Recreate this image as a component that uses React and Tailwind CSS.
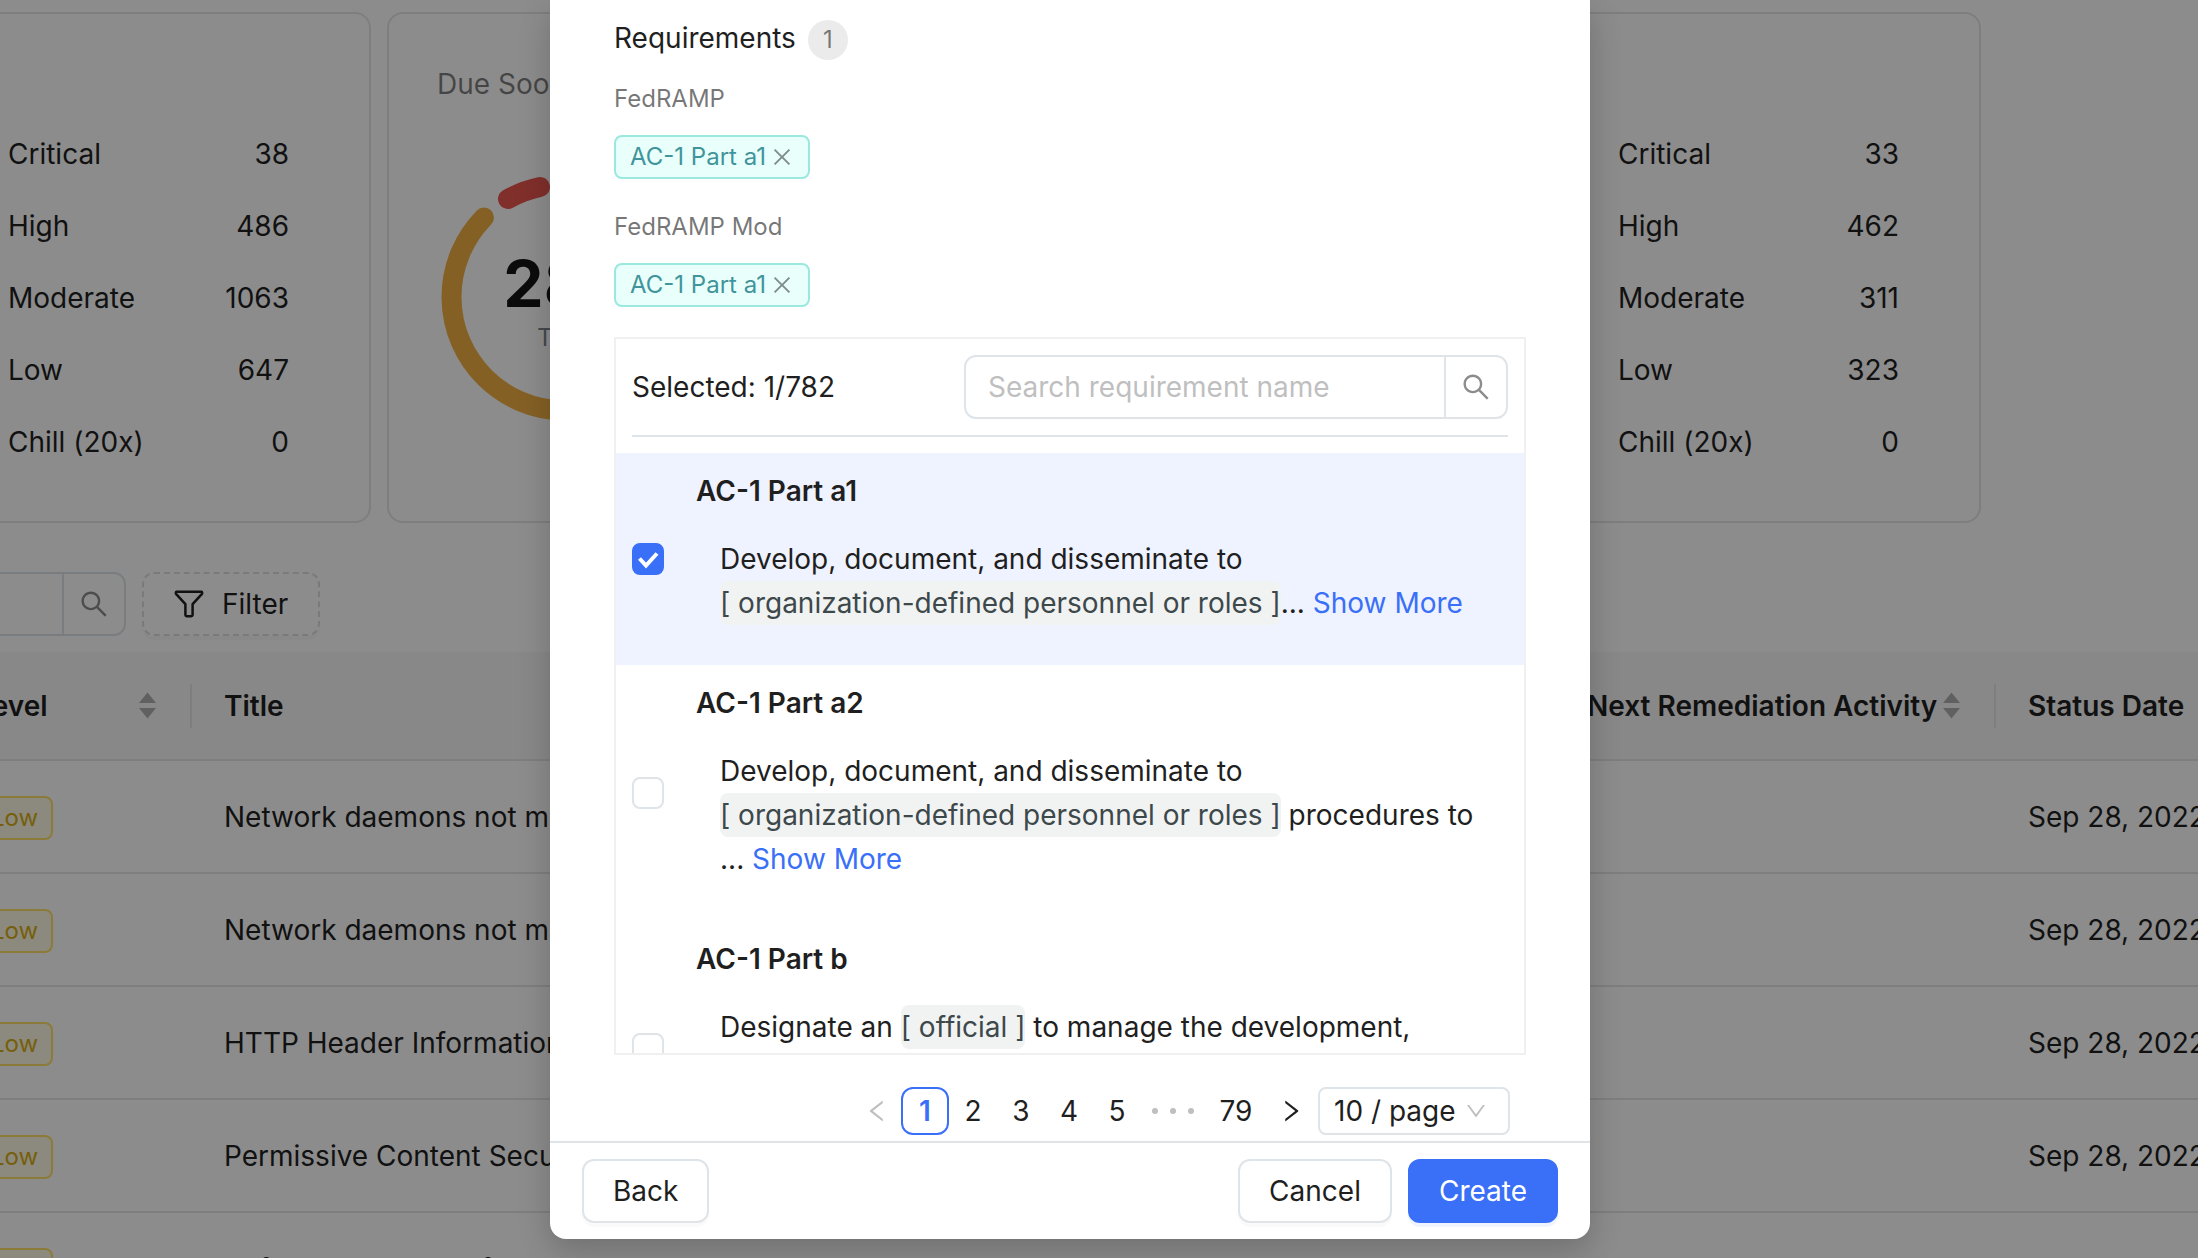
import {
  AiOutlineClose,
  AiOutlineDown,
  AiOutlineLeft,
  AiOutlineRight,
  AiOutlineSearch,
} from "react-icons/ai";

const legends = {
  first: [["Critical", 38], ["High", 486], ["Moderate", 1063], ["Low", 647], ["Chill (20x)", 0]],
  last: [["Critical", 33], ["High", 462], ["Moderate", 311], ["Low", 323], ["Chill (20x)", 0]],
};

const findings = [
  { title: "Network daemons not managing", date: "Sep 28, 2022" },
  { title: "Network daemons not managing", date: "Sep 28, 2022" },
  { title: "HTTP Header Information", date: "Sep 28, 2022" },
  { title: "Permissive Content Security", date: "Sep 28, 2022" },
  { title: "Software usable Software", due: "Sep 28, 2022", date: "Sep 28, 2022" },
];

function Legend({ rows }) {
  return (
    <dl className="ml-auto flex w-[281px] flex-col gap-7 pt-[26px]">
      {rows.map(([name, value]) => (
        <div key={name} className="flex justify-between">
          <dt>{name}</dt>
          <dd>{value}</dd>
        </div>
      ))}
    </dl>
  );
}

function StatCard({ title, children }) {
  return (
    <section className="h-[511px] w-[789px] shrink-0 rounded-2xl border-2 border-[#e6e6e6] pt-12 pr-20 pl-12">
      <h2 className="h-11 text-black/50">{title}</h2>
      {children}
    </section>
  );
}

function Donut() {
  return (
    <div className="mt-[67px] ml-[3px] grid w-[250px] place-items-center">
      <svg viewBox="0 0 250 250" className="col-start-1 row-start-1 w-full" fill="none" strokeWidth="20" strokeLinecap="round">
        <path d="M100 14A113.500 113.500 0 0 0 68 26" stroke="#e9564f" />
        <path d="M44 44.500A113.500 113.500 0 1 0 206 44.500" stroke="#f0b044" />
      </svg>
      <div className="col-start-1 row-start-1 pt-1 text-center">
        <div className="text-[64px] leading-[76px] font-bold text-[#141414]">283</div>
        <div className="text-2xl text-[#7a868c]">Total</div>
      </div>
    </div>
  );
}

function FilterIcon() {
  return (
    <svg viewBox="0 0 30 28" className="h-7 w-[30px]" fill="none" stroke="currentColor" strokeWidth="2.500" strokeLinejoin="round">
      <path d="M2.600 1.800H27.400Q28.600 2.200 28 3.800L18.600 14.200V25Q18.500 26.200 17.200 26.300H12.800Q11.500 26 11.400 24.800V14.200L2 3.800Q1.400 2.200 2.600 1.800Z" />
    </svg>
  );
}

function Sorter() {
  return (
    <svg viewBox="0 0 17 27" className="mr-1 h-[27px] w-[17px] fill-[#b0b0b0]">
      <path d="M8.500 0.500 17 11H0Z M8.500 26.500 17 16H0Z" />
    </svg>
  );
}

function HeaderCell({ children, sortable, className = "" }) {
  return (
    <th scope="col" className={"border-b-2 border-[#e6e6e6] bg-[#f8f8f8] p-0 text-left font-semibold " + className}>
      <div className="flex h-11 items-center justify-between border-r-2 border-[#e6e6e6] pr-[30px] pl-8 whitespace-nowrap">
        {children}
        {sortable && <Sorter />}
      </div>
    </th>
  );
}

function Blank({ children }) {
  return <span className="rounded-lg bg-[#f1f3f3] py-[5px] text-[#3d484b]">[ {children} ]</span>;
}

function ShowMore() {
  return <a href="#more" className="text-[#3a6ff8]">Show More</a>;
}

function Requirement({ id, name, checked, children }) {
  return (
    <li className={"flex items-center gap-8 px-4 pt-4 pb-10 " + (checked ? "bg-[#eff3ff]" : "")}>
      <span className="mt-6 grid size-8 shrink-0">
        <input
          id={id}
          type="checkbox"
          defaultChecked={checked}
          className="peer col-start-1 row-start-1 size-8 appearance-none rounded-lg border-2 border-[#dfe4e8] bg-white checked:border-[#3a6ff8] checked:bg-[#3a6ff8]"
        />
        <svg viewBox="0 0 32 32" className="pointer-events-none col-start-1 row-start-1 hidden size-8 peer-checked:block" fill="none" stroke="#fff" strokeWidth="4">
          <path d="M7.500 15.500 14 22.500 25 10.500" />
        </svg>
      </span>
      <div className="min-w-0 grow">
        <label htmlFor={id} className="block font-semibold">{name}</label>
        <p className="mt-6 pl-6">{children}</p>
      </div>
    </li>
  );
}

function TagGroup({ framework }) {
  return (
    <div className="mb-[30px]">
      <h4 className="text-2xl leading-9 text-black/55">{framework}</h4>
      <span className="mt-[18px] flex h-11 w-fit items-center gap-1 rounded-lg border-2 border-[#9be8df] bg-[#e9fffc] px-3.5 text-2xl text-[#41949b]">
        AC-1 Part a1
        <button type="button" aria-label={"Remove AC-1 Part a1 from " + framework} className="text-2xl text-black/45">
          <AiOutlineClose />
        </button>
      </span>
    </div>
  );
}

function SearchBox({ label, placeholder, className }) {
  return (
    <div className={"flex h-16 overflow-hidden rounded-xl border-2 border-[#dfe4e8] " + className}>
      <input type="search" aria-label={label} placeholder={placeholder} className="min-w-0 grow px-[22px] outline-none placeholder:text-[#bfbfbf]" />
      <button type="button" aria-label={label} className="grid w-[62px] shrink-0 place-items-center border-l-2 border-[#dfe4e8] text-[32px] text-black/45">
        <AiOutlineSearch />
      </button>
    </div>
  );
}

function Dashboard() {
  return (
    <main className="h-full pt-3">
      <div className="flex justify-end gap-4 pr-[217px]">
        <StatCard><Legend rows={legends.first} /></StatCard>
        <StatCard title="Due Soon"><Donut /></StatCard>
        <StatCard><Legend rows={legends.last} /></StatCard>
      </div>

      <div className="mt-[49px] flex gap-4">
        <SearchBox label="Search findings" className="-ml-6 w-[150px] shrink-0" />
        <button type="button" className="flex h-16 items-center gap-[18px] rounded-xl border-2 border-dashed border-[#dfdfdf] px-[30px] shadow-[0_4px_0_rgba(0,0,0,0.02)]">
          <FilterIcon />
          Filter
        </button>
      </div>

      <table className="mt-4 -ml-14 w-[2420px] table-fixed border-separate border-spacing-0">
        <thead>
          <tr className="h-[109px]">
            <HeaderCell sortable className="w-[248px]">Level</HeaderCell>
            <HeaderCell className="w-[1076px]">Title</HeaderCell>
            <HeaderCell className="w-[287px]" />
            <HeaderCell sortable className="w-[441px]">Next Remediation Activity</HeaderCell>
            <HeaderCell>Status Date</HeaderCell>
          </tr>
        </thead>
        <tbody>
          {findings.map((finding, index) => (
            <tr key={index} className="h-[113px] *:border-b-2 *:border-[#e6e6e6] *:px-8">
              <td>
                <span className="inline-flex h-11 items-center rounded-lg border-2 border-[#ffe066] bg-[#fffbe6] px-[13px] text-2xl text-[#d8ad14]">Low</span>
              </td>
              <td>{finding.title}</td>
              <td>{finding.due}</td>
              <td />
              <td>{finding.date}</td>
            </tr>
          ))}
        </tbody>
      </table>
    </main>
  );
}

function Pagination() {
  return (
    <nav aria-label="Requirement pages" className="mt-8 mr-4 flex h-12 items-center justify-end">
      <button type="button" aria-label="Previous page" disabled className="grid size-12 place-items-center text-[28px] text-black/25"><AiOutlineLeft /></button>
      <button type="button" aria-current="page" className="size-12 rounded-xl border-2 border-[#3a6ff8] font-semibold text-[#3a6ff8]">1</button>
      {[2, 3, 4, 5].map((page) => (
        <button type="button" key={page} className="size-12">{page}</button>
      ))}
      <span className="flex w-16 items-center justify-center gap-3">
        <i className="size-1.5 rounded-full bg-[#bfbfbf]" />
        <i className="size-1.5 rounded-full bg-[#bfbfbf]" />
        <i className="size-1.5 rounded-full bg-[#bfbfbf]" />
      </span>
      <button type="button" className="h-12 w-[62px]">79</button>
      <button type="button" aria-label="Next page" className="grid size-12 place-items-center text-[28px]"><AiOutlineRight /></button>
      <span className="ml-[3px] grid w-48 items-center">
        <select aria-label="Page size" className="col-start-1 row-start-1 h-12 appearance-none rounded-lg border-2 border-[#dfe4e8] pl-3.5">
          <option>10 / page</option>
          <option>20 / page</option>
          <option>50 / page</option>
        </select>
        <AiOutlineDown className="pointer-events-none col-start-1 row-start-1 mr-[22px] justify-self-end text-2xl text-black/25" />
      </span>
    </nav>
  );
}

function RequirementsDialog() {
  const button = "h-16 rounded-xl border-2 px-[29px]";
  return (
    <div role="dialog" aria-modal="true" aria-label="Requirements" className="w-[1040px] overflow-hidden rounded-b-2xl bg-white shadow-[0_12px_32px_rgba(0,0,0,0.2)]">
      <div className="px-16 pt-4 pb-1.5">
        <h3 className="flex items-start gap-3">
          Requirements
          <span className="mt-1 grid size-10 place-items-center rounded-full bg-[#ebebeb] text-2xl text-black/50">1</span>
        </h3>
        <div className="mt-[21px]">
          <TagGroup framework="FedRAMP" />
          <TagGroup framework="FedRAMP Mod" />
        </div>
        <div className="flex h-[718px] flex-col overflow-hidden border-2 border-[#f0f0f0]">
          <div className="mx-4 mb-4 flex shrink-0 items-center justify-between border-b-2 border-[#dfe4e8] py-4">
            <span>Selected: 1/782</span>
            <SearchBox label="Search requirements" placeholder="Search requirement name" className="w-[544px]" />
          </div>
          <ul>
            <Requirement id="ac-1-a1" name="AC-1 Part a1" checked>
              Develop, document, and disseminate to<br />
              <Blank>organization-defined personnel or roles</Blank>... <ShowMore />
            </Requirement>
            <Requirement id="ac-1-a2" name="AC-1 Part a2">
              Develop, document, and disseminate to<br />
              <Blank>organization-defined personnel or roles</Blank> procedures to<br />
              ... <ShowMore />
            </Requirement>
            <Requirement id="ac-1-b" name="AC-1 Part b">
              Designate an <Blank>official</Blank> to manage the development,<br />
              documentation, and dissemination of the policy<br />
              ... <ShowMore />
            </Requirement>
          </ul>
        </div>
        <Pagination />
      </div>
      <footer className="flex gap-4 border-t-2 border-[#dfe4e8] px-8 py-4">
        <button type="button" className={button + " mr-auto border-[#dfe4e8] shadow-[0_4px_0_rgba(0,0,0,0.02)]"}>Back</button>
        <button type="button" className={button + " border-[#dfe4e8] shadow-[0_4px_0_rgba(0,0,0,0.02)]"}>Cancel</button>
        <button type="button" className={button + " border-[#3a6ff8] bg-[#3a6ff8] text-white shadow-[0_4px_0_rgba(58,111,248,0.08)]"}>Create</button>
      </footer>
    </div>
  );
}

export default function App() {
  return (
    <div className="relative h-screen overflow-hidden bg-white font-['Inter',sans-serif] text-[28px] leading-[44px] text-[#1f1f1f]">
      <Dashboard />
      <div className="absolute inset-0 flex items-start justify-center bg-black/45 pr-[58px]">
        <RequirementsDialog />
      </div>
    </div>
  );
}
